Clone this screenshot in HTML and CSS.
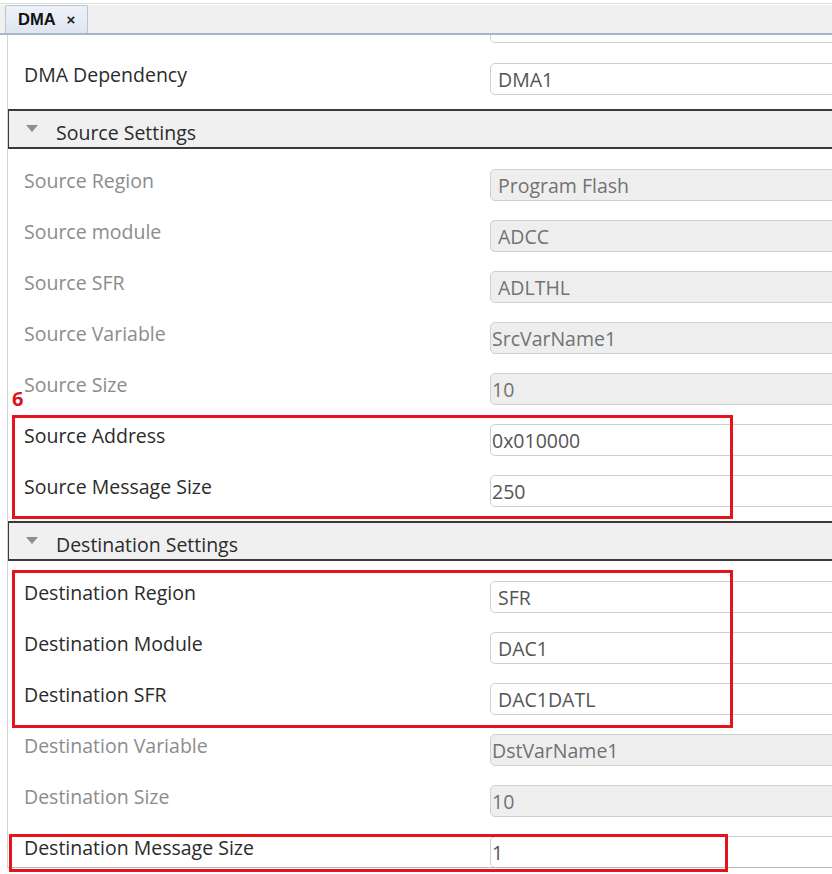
FILE: index.html
```html
<!DOCTYPE html>
<html>
<head>
<meta charset="utf-8">
<link rel="stylesheet" href="styles.css">
</head>
<body>
<div class="page">
  <div class="topline"></div>
  <div class="tabbar">
    <div class="tab"><span class="tab-title">DMA</span><span class="tab-close">×</span></div>
  </div>
  <div class="panel">
    <div class="stub"><div></div><div class="stub-field"></div></div>
    <div class="row"><div class="label">DMA Dependency</div><div class="field pad">DMA1</div></div>

    <div class="section">
      <span class="tri"></span><span class="section-title">Source Settings</span>
    </div>
    <div class="rows">
      <div class="row"><div class="label dis">Source Region</div><div class="field pad ro">Program Flash</div></div>
      <div class="row"><div class="label dis">Source module</div><div class="field pad ro">ADCC</div></div>
      <div class="row"><div class="label dis">Source SFR</div><div class="field pad ro">ADLTHL</div></div>
      <div class="row"><div class="label dis">Source Variable</div><div class="field ro">SrcVarName1</div></div>
      <div class="row"><div class="label dis">Source Size</div><div class="field ro">10</div></div>
      <div class="row"><div class="label">Source Address</div><div class="field">0x010000</div></div>
      <div class="row"><div class="label">Source Message Size</div><div class="field">250</div></div>
    </div>

    <div class="section">
      <span class="tri"></span><span class="section-title">Destination Settings</span>
    </div>
    <div class="rows">
      <div class="row"><div class="label">Destination Region</div><div class="field pad">SFR</div></div>
      <div class="row"><div class="label">Destination Module</div><div class="field pad">DAC1</div></div>
      <div class="row"><div class="label">Destination SFR</div><div class="field pad">DAC1DATL</div></div>
      <div class="row"><div class="label dis">Destination Variable</div><div class="field ro">DstVarName1</div></div>
      <div class="row"><div class="label dis">Destination Size</div><div class="field ro">10</div></div>
      <div class="row"><div class="label">Destination Message Size</div><div class="field">1</div></div>
    </div>
  </div>

  <div class="callout-num">6</div>
  <div class="callout box1"></div>
  <div class="callout box2"></div>
  <div class="callout box3"></div>
</div>
</body>
</html>
```

FILE: styles.css
```css
html, body {
  margin: 0;
  padding: 0;
  background: #ffffff;
}
.page {
  position: relative;
  width: 832px;
  height: 874px;
  overflow: hidden;
  font-family: "Open Sans", "Noto Sans", sans-serif;
}
.topline {
  height: 3px;
  border-bottom: 1px solid #dcdcdc;
}
.tabbar {
  margin-top: 1px;
  height: 28px;
  background: #f0f0f0;
  border-bottom: 2px solid #a9b6c9;
  display: flex;
  align-items: stretch;
  padding-left: 5px;
}
.tab {
  width: 83px;
  box-sizing: border-box;
  border: 1px solid #b9c5d6;
  border-bottom: none;
  border-radius: 2px 2px 0 0;
  background: linear-gradient(#edf1f8, #dfe6f1);
  display: flex;
  align-items: center;
  padding-left: 12px;
  gap: 11px;
}
.tab-title {
  font-family: "Liberation Sans", Arial, sans-serif;
  font-weight: bold;
  font-size: 16.5px;
  color: #111;
}
.tab-close {
  font-family: "Liberation Sans", Arial, sans-serif;
  font-weight: bold;
  font-size: 15px;
  color: #222;
}
.panel {
  margin-left: 7px;
  height: 833px;
  box-sizing: border-box;
  border-left: 1px solid #d4d4d4;
  border-bottom: 1px solid #b9b9b9;
  overflow: hidden;
}
.stub {
  display: grid;
  grid-template-columns: 482px 1fr;
  height: 8px;
  margin-bottom: 10px;
}
.stub-field {
  margin-right: -20px;
  border: 1px solid #d0d0d0;
  border-top: none;
  border-radius: 0 0 5px 5px;
}
.rows {
  padding-top: 10px;
}
.row {
  display: grid;
  grid-template-columns: 482px 1fr;
  align-items: center;
  height: 51px;
}
.label {
  padding-left: 16px;
  padding-bottom: 8px;
  font-size: 19.5px;
  color: #2b2b2b;
  white-space: nowrap;
}
.label.dis {
  color: #8c8c8c;
}
.field {
  height: 32px;
  box-sizing: border-box;
  margin-right: -20px;
  border: 1px solid #cfcfcf;
  border-radius: 5px;
  background: #ffffff;
  display: flex;
  align-items: center;
  padding-left: 1px;
  padding-top: 2px;
  font-size: 19.5px;
  color: #555555;
  white-space: nowrap;
}
.field.pad {
  padding-left: 7px;
}
.field.ro {
  background: #eeeeee;
  color: #727272;
}
.section {
  margin-top: 5px;
  margin-left: -1px;
  height: 40px;
  box-sizing: border-box;
  border-top: 2px solid #3a3a3a;
  border-bottom: 2px solid #3a3a3a;
  border-left: 2px solid #3a3a3a;
  background: #f0f0f0;
  display: flex;
  align-items: center;
  padding-left: 17px;
  padding-top: 6px;
}
.tri {
  width: 0;
  height: 0;
  border-left: 6px solid transparent;
  border-right: 6px solid transparent;
  border-top: 7px solid #8e8e8e;
  margin-right: 18px;
  margin-top: -7px;
}
.section-title {
  font-size: 19.5px;
  color: #2b2b2b;
}
.callout {
  position: absolute;
  border: 3px solid #e4141c;
  box-sizing: border-box;
}
.box1 {
  left: 12px;
  top: 415px;
  width: 721px;
  height: 104px;
}
.box2 {
  left: 12px;
  top: 570px;
  width: 721px;
  height: 158px;
}
.box3 {
  left: 9px;
  top: 834px;
  width: 719px;
  height: 38px;
}
.callout-num {
  position: absolute;
  left: 12px;
  top: 385px;
  font-family: "Open Sans", sans-serif;
  font-weight: bold;
  font-size: 20px;
  color: #d8141c;
}
```
